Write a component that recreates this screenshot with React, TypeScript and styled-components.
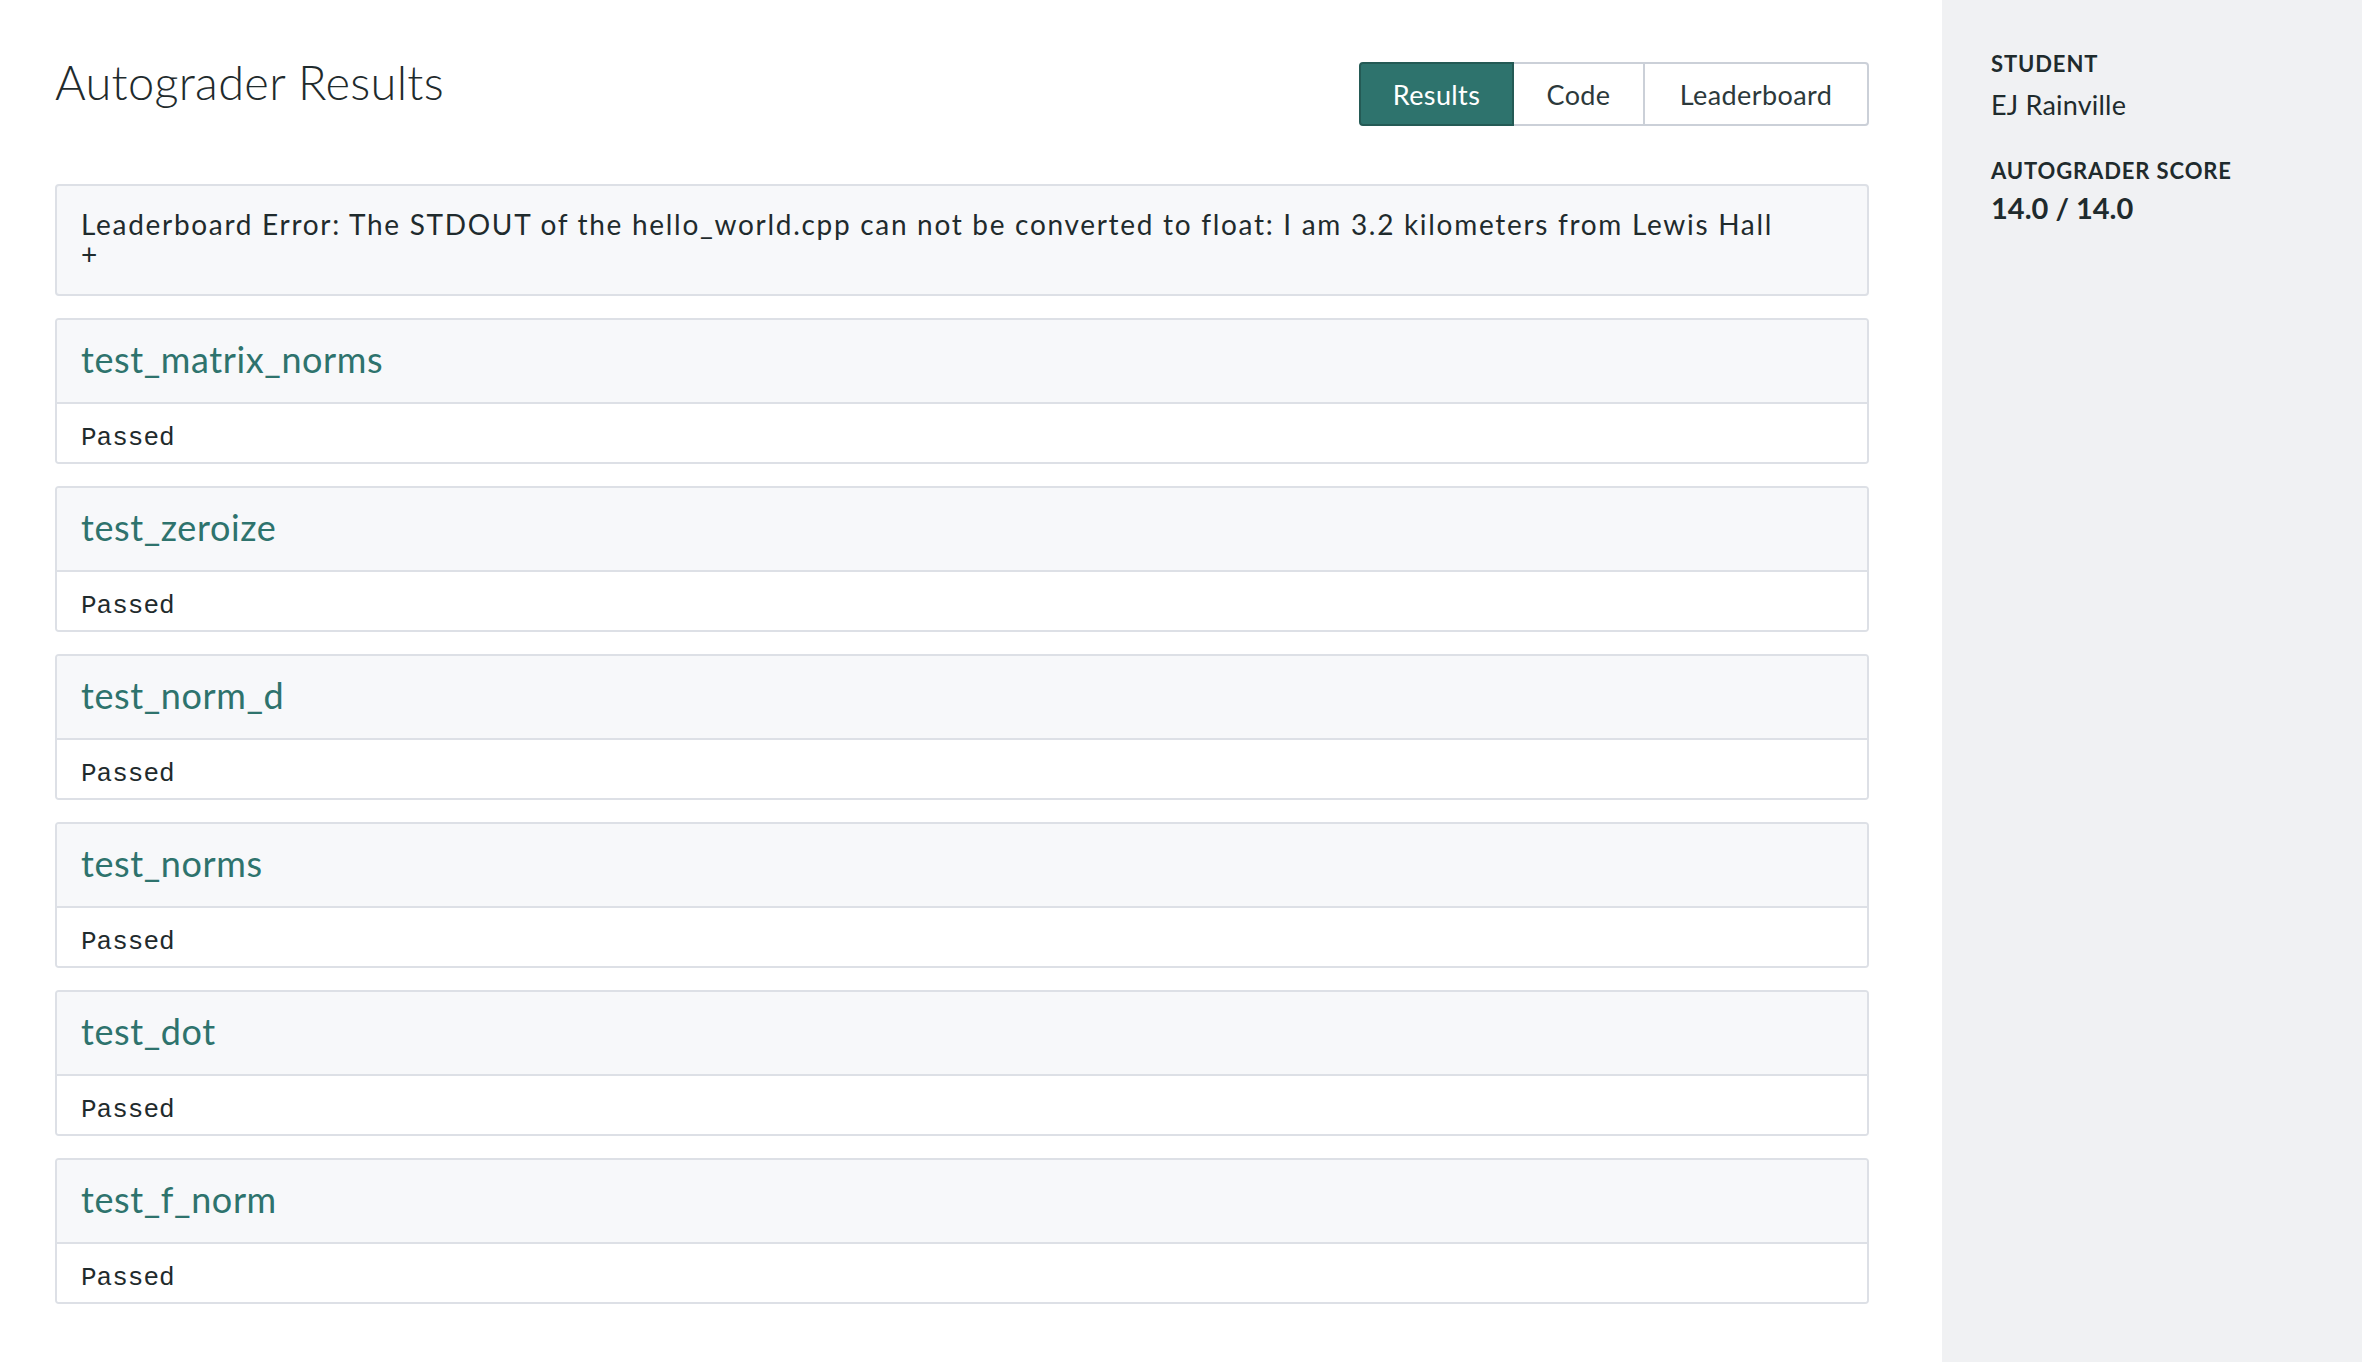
import React from 'react'
import styled, { createGlobalStyle } from 'styled-components'

const ink = '#1f2b2d'
const teal = '#2e736d'
const line = '#dde0e6'
const panel = '#f7f8fa'

const GlobalStyle = createGlobalStyle`
  html, body {
    margin: 0;
    padding: 0;
    background: #ffffff;
  }
  body {
    font-family: 'Lato', 'Open Sans', sans-serif;
    color: ${ink};
  }
  * {
    box-sizing: border-box;
  }
`

const tests = [
  'test_matrix_norms',
  'test_zeroize',
  'test_norm_d',
  'test_norms',
  'test_dot',
  'test_f_norm',
]

const tabs = [
  { label: 'Results', width: 155 },
  { label: 'Code', width: 133 },
  { label: 'Leaderboard', width: 226 },
]

export default function App() {
  return (
    <>
      <GlobalStyle />
      <Page>
        <Main>
          <Header>
            <Title>Autograder Results</Title>
            <TabGroup>
              {tabs.map((tab, i) => (
                <Tab key={tab.label} $active={i === 0} $width={tab.width}>
                  {tab.label}
                </Tab>
              ))}
            </TabGroup>
          </Header>

          <ErrorBox>
            Leaderboard Error: The STDOUT of the hello_world.cpp can not be
            converted to float: I am 3.2 kilometers from Lewis Hall
            <br />+
          </ErrorBox>

          {tests.map(name => (
            <TestCard key={name}>
              <TestHeader>
                <TestName>{name}</TestName>
              </TestHeader>
              <TestBody>Passed</TestBody>
            </TestCard>
          ))}
        </Main>

        <Sidebar>
          <Label>Student</Label>
          <Value>EJ Rainville</Value>
          <Label $spaced>Autograder Score</Label>
          <Score>14.0 / 14.0</Score>
        </Sidebar>
      </Page>
    </>
  )
}

const Page = styled.div`
  display: flex;
  min-height: 100vh;
`

const Main = styled.main`
  flex: 1;
  padding: 0 73px 40px 55px;
`

const Header = styled.div`
  display: flex;
  justify-content: space-between;
  align-items: flex-start;
  padding-top: 54px;
  margin-bottom: 58px;
`

const Title = styled.h1`
  margin: 0;
  font-size: 47px;
  line-height: 1.2;
  font-weight: 300;
  letter-spacing: 0.3px;
  color: ${ink};
`

const TabGroup = styled.div`
  display: flex;
  margin-top: 8px;
`

const Tab = styled.button<{ $active?: boolean; $width: number }>`
  width: ${p => p.$width}px;
  height: 64px;
  padding: 0;
  margin-left: -2px;
  font-family: 'Lato', sans-serif;
  font-size: 27px;
  letter-spacing: 0.4px;
  color: ${p => (p.$active ? '#ffffff' : '#2c393b')};
  background: ${p => (p.$active ? teal : '#ffffff')};
  border: 2px solid ${p => (p.$active ? '#245a55' : '#cbd0d8')};
  position: relative;
  z-index: ${p => (p.$active ? 1 : 0)};
  cursor: pointer;

  &:first-child {
    margin-left: 0;
    border-radius: 4px 0 0 4px;
  }
  &:last-child {
    border-radius: 0 4px 4px 0;
  }
`

const ErrorBox = styled.div`
  background: ${panel};
  border: 2px solid ${line};
  border-radius: 4px;
  padding: 23px 24px 25px;
  font-size: 28px;
  line-height: 30px;
  letter-spacing: 1.7px;
`

const TestCard = styled.section`
  margin-top: 22px;
  border: 2px solid ${line};
  border-radius: 4px;
  overflow: hidden;
`

const TestHeader = styled.div`
  background: ${panel};
  padding: 18px 24px 22px;
  border-bottom: 2px solid ${line};
`

const TestName = styled.h2`
  margin: 0;
  font-size: 36px;
  line-height: 42px;
  font-weight: 400;
  letter-spacing: 0.6px;
  color: ${teal};
`

const TestBody = styled.pre`
  margin: 0;
  padding: 19px 24px 9px;
  background: #ffffff;
  font-family: 'Liberation Mono', 'Courier New', monospace;
  font-size: 26px;
  line-height: 30px;
  color: ${ink};
`

const Sidebar = styled.aside`
  width: 420px;
  flex-shrink: 0;
  background: #f0f1f3;
  padding: 51px 40px 0 49px;
`

const Label = styled.div<{ $spaced?: boolean }>`
  margin-top: ${p => (p.$spaced ? '36px' : '0')};
  font-size: 22px;
  line-height: 1.2;
  font-weight: 700;
  text-transform: uppercase;
  letter-spacing: 0.04em;
`

const Value = styled.div`
  margin-top: 12px;
  font-size: 27px;
  line-height: 1.2;
  letter-spacing: 0.2px;
`

const Score = styled.div`
  margin-top: 7px;
  font-size: 29px;
  line-height: 1.2;
  font-weight: 700;
`
